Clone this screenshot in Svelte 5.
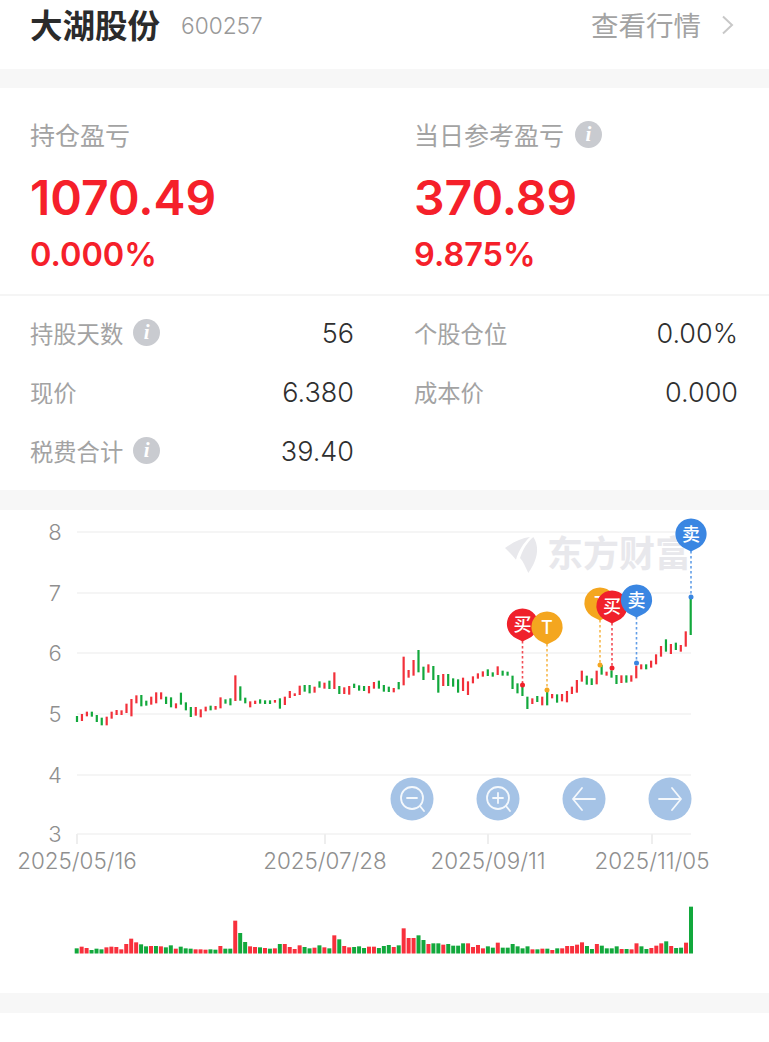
<script>
  // 读数来自参考图放大三倍后的坐标: [上, 下, 涨跌]
  const zoomed = [
    { y0: 640, rows: [[228,246,0],[222,243,1],[215,229,1],[215,230,0],[225,246,0],[233,256,0],[230,256,1],[215,236,1],[210,225,1],[211,225,1],[191,219,1],[177,229,1],[166,190,1],[165,199,0],[182,197,0],[170,194,1],[157,190,1],[157,178,1],[170,192,0],[172,202,0],[190,205,1],[158,194,0],[187,211,0],[201,231,0],[201,227,1],[208,232,1],[200,214,1],[197,211,0],[198,209,1],[172,205,1],[178,191,0],[175,196,0],[106,183,1],[139,182,0],[173,190,0],[184,202,1],[182,192,1],[178,191,0],[181,192,0],[181,192,0],[180,188,1],[175,206,0],[170,195,1],[153,174,1],[160,168,1],[137,165,1],
      [135,155,0],[135,160,0],[140,158,1],[124,143,0],[128,146,1],[122,147,0],[97,147,1],[138,162,0],[142,162,1],[138,164,1],[131,144,0],[136,152,0],[138,153,0],[138,160,1],[126,146,1],[122,146,0],[135,155,0],[140,156,0],[144,157,1],[126,148,0],[50,136,1],[90,113,1],[60,107,1],[30,97,0],[80,120,0],[73,98,1],[78,120,0],[105,158,0],[102,138,1],[102,138,0],[115,140,0],[118,158,0],[113,153,1],[124,165,1],[109,130,1],[100,116,1],[94,110,1]] },
    { y0: 510, rows: [[478,498,0],[487,500,0],[469,495,1],[482,497,0],[485,497,0],[497,537,0],[520,550,0],[525,558,0],[560,597,0],[565,582,1],[558,576,0],[560,586,1],[545,586,0],[552,565,1],[553,578,0],[552,574,1],[543,577,1],[530,552,1],[510,548,1],[482,515,1],[497,524,0],[505,525,0],[482,523,1],[465,494,0],[485,497,1],[481,503,0],[495,522,0],[496,519,1],[496,518,0],[496,515,1],[467,505,1],[463,478,1],[463,478,0],[452,473,1],[433,463,1],[408,440,1],[388,425,0],[402,432,1],[398,420,0],[405,425,1],[364,410,1],[262,375,0]] }
  ];
  const candles = zoomed.flatMap((s) => s.rows.map(([a, b, up]) => ({ top: s.y0 + a / 3, bottom: s.y0 + b / 3, up })));

  const volTops = [[145,0],[140,1],[144,1],[150,0],[146,0],[148,0],[142,1],[140,1],[141,1],[148,1],[132,1],[116,1],[127,1],[133,0],[139,0],[138,1],[138,0],[139,1],[142,0],[136,0],[146,1],[140,0],[145,0],[146,0],[148,1],[148,1],[149,1],[148,0],[149,0],[138,1],[146,0],[146,0],[62,1],[99,0],[126,0],[139,1],[141,1],[142,0],[144,1],[146,0],[145,1],[132,0],[132,1],[141,1],[147,1],[136,1],[141,0],[145,0],[143,1],[136,0],[142,1],[145,0],[106,1],[118,0],[138,1],[142,1],[141,0],[139,0],[144,0],[140,1],[140,1],[144,0],
    [138,0],[135,0],[141,1],[136,0],[85,1],[114,1],[114,1],[106,0],[120,0],[132,1],[130,0],[130,0],[134,1],[132,0],[137,0],[137,0],[130,0],[130,1],[141,1],[135,1],[145,1],[139,0],[143,0],[128,1],[143,0],[143,0],[132,0],[139,0],[145,0],[139,0],[148,1],[148,0],[146,1],[146,0],[150,1],[145,0],[145,1],[138,1],[138,1],[134,1],[127,1],[138,0],[147,0],[132,1],[137,0],[145,0],[145,0],[139,0],[147,1],[147,0],[148,1],[130,1],[139,0],[147,0],[144,1],[137,1],[130,1],[124,0],[138,1],[144,0],[143,0],[128,1],[20,0]];

  const candleX = (i) => 77 + (i * 613.7) / (candles.length - 1);
  const volX = (i) => 76.7 + (i * 614.3) / (volTops.length - 1);

  const gridLines = [[8, 532], [7, 593], [6, 653], [5, 714], [4, 775], [3, 834]];
  const dates = [['2025/05/16', 77], ['2025/07/28', 325], ['2025/09/11', 488], ['2025/11/05', 652]];

  const RED = '#f0212b';
  const BLUE = '#3a86e2';
  const ORANGE = '#f4a61f';
  const pins = [
    { x: 522.5, y: 624, dot: 685, color: RED, label: '买' },
    { x: 547, y: 627, dot: 690, color: ORANGE, label: 'T' },
    { x: 600, y: 603, dot: 665, color: ORANGE, label: 'T' },
    { x: 612, y: 606, dot: 668, color: RED, label: '买' },
    { x: 636.5, y: 600, dot: 663, color: BLUE, label: '卖' },
    { x: 691, y: 534, dot: 597, color: BLUE, label: '卖' }
  ];

  function pinPath(x, y) {
    const r = 15.6;
    const dx = 6;
    const dy = Math.sqrt(r * r - dx * dx);
    return `M${x} ${y + r + 2}L${x - dx} ${y + dy}A${r} ${r} 0 1 1 ${x + dx} ${y + dy}Z`;
  }

  const zoomBtns = [412, 498, 584, 670];
</script>

{#snippet info()}
  <span class="info">i</span>
{/snippet}

<div class="page">
  <header class="top">
    <div class="name">
      <h1>大湖股份</h1>
      <span class="code">600257</span>
    </div>
    <div class="quote">
      <span>查看行情</span>
      <svg viewBox="0 0 14 20" width="14" height="20">
        <polyline points="2,1.5 11,10 2,18.5" fill="none" stroke="#c8c8c8" stroke-width="2" />
      </svg>
    </div>
  </header>

  <section class="card">
    <div class="summary">
      <div>
        <div class="label">持仓盈亏</div>
        <div class="big">1070.49</div>
        <div class="pct">0.000%</div>
      </div>
      <div>
        <div class="label">当日参考盈亏 {@render info()}</div>
        <div class="big">370.89</div>
        <div class="pct">9.875%</div>
      </div>
    </div>

    <div class="details">
      <div class="row"><span class="key">持股天数 {@render info()}</span><span class="val">56</span></div>
      <div class="row"><span class="key">个股仓位</span><span class="val">0.00%</span></div>
      <div class="row"><span class="key">现价</span><span class="val">6.380</span></div>
      <div class="row"><span class="key">成本价</span><span class="val">0.000</span></div>
      <div class="row"><span class="key">税费合计 {@render info()}</span><span class="val">39.40</span></div>
    </div>
  </section>

  <section class="chart">
    <svg viewBox="0 510 769 483" width="769" height="483">
      {#each gridLines as [v, y]}
        <line x1="77" x2="691" y1={y} y2={y} stroke="#f5f5f5" stroke-width="2" />
        <text x="55" y={y + 8} class="axis" text-anchor="middle">{v}</text>
      {/each}
      {#each dates as [d, x]}
        <line x1={x} x2={x} y1="834" y2="844" stroke="#eeeeee" stroke-width="2" />
        <text x={x} y="869" class="axis date" text-anchor="middle">{d}</text>
      {/each}

      <!-- 水印 -->
      <g fill="#e8e8ec">
        <path d="M505 548C513.3 542 521.7 538 530 537C523.3 543 518.3 551.3 516 559.7C513.3 556.3 509.3 552 505 548Z" />
        <path d="M533.3 537C538.3 544.7 540 556.3 528.3 573C525 566.3 523.3 561.3 520 558C522.7 549.7 527.3 542 533.3 537Z" />
      </g>
      <text x="547" y="567" class="mark">东方财富</text>

      {#each candles as c, i}
        <rect x={candleX(i) - 1.1} y={c.top} width="2.2" height={c.bottom - c.top} fill={c.up ? '#f2303a' : '#12a83c'} />
      {/each}

      {#each pins as p}
        <line x1={p.x} x2={p.x} y1={p.y + 17} y2={p.dot} stroke={p.color} stroke-width="1.6" stroke-dasharray="2.5 2.5" stroke-opacity="0.8" />
        <circle cx={p.x} cy={p.dot} r="2.5" fill={p.color} />
      {/each}
      {#each pins as p}
        <path d={pinPath(p.x, p.y)} fill={p.color} />
        <text x={p.x} y={p.y + 6.5} class="pin" text-anchor="middle">{p.label}</text>
      {/each}

      {#each zoomBtns as x}
        <circle cx={x} cy="799" r="21.5" fill="#a5c3e6" />
      {/each}
      <g fill="none" stroke="#f4f8fc" stroke-width="1.8" stroke-linecap="round" stroke-linejoin="round">
        <circle cx="412" cy="798" r="11" />
        <path d="M407 798H417M420 806L424 811" />
        <circle cx="498" cy="798" r="11" />
        <path d="M493 798H503M498 793V803M506 806L510 811" />
        <path d="M573 799H595M582 788L573 799L582 810" />
        <path d="M659 799H681M672 788L681 799L672 810" />
      </g>

      {#each volTops as [t, up], i}
        <rect x={volX(i) - 2} y={900 + t / 3} width="4" height={953.5 - (900 + t / 3)} fill={up ? '#f8303c' : '#12a83c'} />
      {/each}
    </svg>
  </section>

  <div class="foot"></div>
</div>

<style>
  :global(body) {
    background: #fff;
  }

  .page {
    width: 769px;
    font-family: Inter, "Noto Sans CJK SC", sans-serif;
    background: #f7f7f7;
  }

  .top {
    display: flex;
    justify-content: space-between;
    align-items: center;
    height: 50px;
    padding: 0 34px 19px 30px;
    background: #fff;
  }

  .name {
    display: flex;
    align-items: center;
    gap: 21px;
  }

  h1 {
    margin: 0 0 4px;
    font-size: 32.5px;
    font-weight: 700;
    color: #2b2b2b;
  }

  .code {
    font-size: 22.7px;
    font-weight: 300;
    color: #999;
  }

  .quote {
    display: flex;
    align-items: center;
    gap: 20px;
    font-size: 27.5px;
    color: #a3a3a3;
  }

  .quote span {
    margin-bottom: 3px;
  }

  .quote svg {
    display: block;
  }

  .card {
    margin-top: 19px;
    background: #fff;
    height: 402px;
  }

  .summary {
    display: grid;
    grid-template-columns: 384px 1fr;
    height: 208px;
    padding: 31px 0 0 30px;
    box-sizing: border-box;
    border-bottom: 2px solid #f5f5f5;
  }

  .label {
    display: flex;
    align-items: center;
    gap: 11px;
    height: 30px;
    font-size: 25px;
    color: #a3a3a3;
  }

  .big {
    margin-top: 20px;
    height: 58px;
    line-height: 58px;
    font-size: 48px;
    font-weight: 600;
    color: #f5202a;
  }

  .pct {
    margin-top: 9px;
    height: 38px;
    line-height: 38px;
    font-size: 32.5px;
    font-weight: 600;
    color: #f5202a;
  }

  .info {
    display: inline-flex;
    justify-content: center;
    align-items: center;
    width: 27px;
    height: 27px;
    border-radius: 50%;
    background: #c9cbd0;
    color: #fff;
    font: italic 700 21px "Liberation Serif", serif;
  }

  .details {
    display: grid;
    grid-template-columns: 324px 324px;
    column-gap: 60px;
    grid-auto-rows: 59px;
    padding: 7px 0 0 30px;
  }

  .row {
    display: flex;
    justify-content: space-between;
    align-items: center;
  }

  .key {
    display: flex;
    align-items: center;
    gap: 10px;
    font-size: 23.3px;
    color: #a3a3a3;
  }

  .val {
    padding-top: 2px;
    font-size: 27px;
    font-weight: 300;
    color: #2f2f2f;
  }

  .chart {
    margin-top: 20px;
    background: #fff;
    height: 483px;
  }

  .chart svg {
    display: block;
  }

  .axis {
    font-size: 22px;
    font-weight: 300;
    fill: #8f8f8f;
  }

  .date {
    font-size: 22.4px;
  }

  .mark {
    font-size: 36px;
    font-weight: 700;
    fill: #e8e8ec;
  }

  .pin {
    font-size: 18px;
    font-weight: 500;
    fill: #fff;
  }

  .foot {
    margin-top: 20px;
    height: 29px;
    background: #fff;
  }
</style>
